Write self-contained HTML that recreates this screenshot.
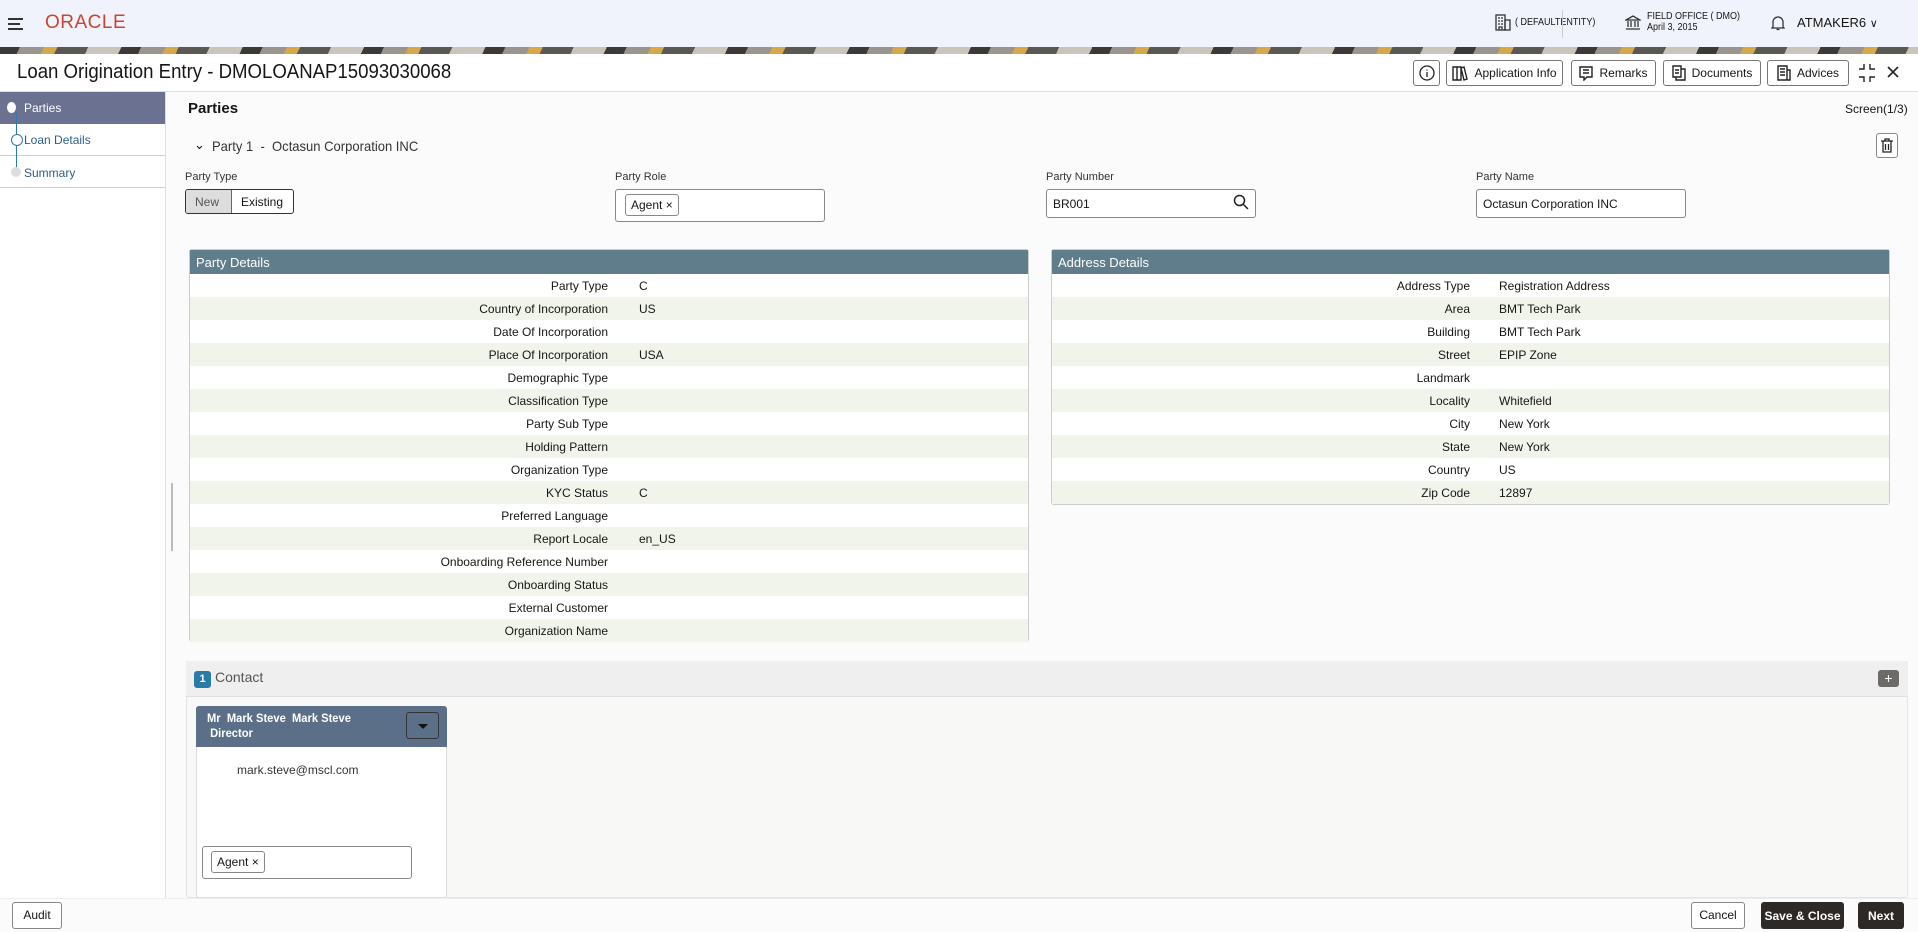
<!DOCTYPE html>
<html><head><meta charset="utf-8"><style>
*{box-sizing:border-box;margin:0;padding:0}
body{width:1918px;height:932px;overflow:hidden;position:relative;background:#fbfbfb;font-family:"Liberation Sans Narrow","Liberation Sans",sans-serif;color:#161513;font-size:13px}
.a{position:absolute}
.hdr{left:0;top:0;width:1918px;height:47px;background:#f0f3fb}
.strip{left:0;top:47px;width:1918px;height:7px;background:repeating-linear-gradient(115deg,#3b3a38 0 18px,#9a968f 18px 40px,#d6a84a 40px 52px,#5a5854 52px 80px,#c9c5bd 80px 110px)}
.title{left:0;top:54px;width:1918px;height:38px;background:#fff;border-bottom:1px solid #ddd}
.btn{position:absolute;top:60px;height:26px;border:1px solid #777;border-radius:3px;background:#fff;font-size:12px;display:flex;align-items:center;justify-content:center;gap:6px}
.side{left:0;top:92px;width:166px;height:806px;background:#fff;border-right:1px solid #ddd}
.si{position:absolute;left:0;width:165px;height:32px;border-bottom:1px solid #ccc;font-size:12px;padding:9px 0 0 24px;color:#2b5f8a}
.lbl{font-size:11px;color:#333}
.inp{position:absolute;border:1px solid #888;border-radius:3px;background:#fff}
.chip{position:absolute;border:1px solid #888;border-radius:3px;background:#fff;font-size:12px;padding:3px 5px}
.pan{position:absolute;background:#fff;border:1px solid #ccc;border-radius:3px}
.ph{height:24px;background:#607d8b;color:#fff;font-size:13px;padding:5px 6px}
.row{height:23px;font-size:12px;position:relative}
.row .k{position:absolute;right:0;text-align:right;top:5px}
.row .v{position:absolute;top:5px}
.dk{position:absolute;top:902px;height:27px;background:#2d2926;color:#fff;border-radius:3px;font-size:12px;font-weight:bold;display:flex;align-items:center;justify-content:center}
</style></head><body>
<div class="a hdr"></div>
<div class="a" style="left:8px;top:18px;width:15px;height:2px;background:#333"></div>
<div class="a" style="left:8px;top:23px;width:12px;height:2px;background:#333"></div>
<div class="a" style="left:8px;top:28px;width:15px;height:2px;background:#333"></div>
<div class="a" style="left:45px;top:12px;color:#c74634;font-family:'Liberation Sans',sans-serif;font-size:19px;letter-spacing:0.5px">ORACLE</div>
<svg class="a" style="left:1495px;top:14px" width="16" height="17" viewBox="0 0 16 17" fill="none" stroke="#333" stroke-width="1.3"><rect x="1" y="1" width="9" height="15"/><rect x="10" y="6" width="5" height="10"/><path d="M3 4h2M6 4h2M3 7h2M6 7h2M3 10h2M6 10h2M4 16v-3h3v3"/></svg>
<div class="a" style="left:1515px;top:17px;font-size:10px;transform:scaleX(0.9);transform-origin:left">( DEFAULTENTITY)</div>
<div class="a" style="left:1562px;top:10px;width:1px;height:28px;background:#ccc"></div>
<svg class="a" style="left:1625px;top:15px" width="16" height="15" viewBox="0 0 16 15" fill="none" stroke="#333" stroke-width="1.3"><path d="M1 5L8 1l7 4zM3 6v6M6 6v6M10 6v6M13 6v6M1 14h14"/></svg>
<div class="a" style="left:1647px;top:11px;font-size:10px;line-height:11px;transform:scaleX(0.9);transform-origin:left">FIELD OFFICE ( DMO)<br>April 3, 2015</div>
<svg class="a" style="left:1771px;top:14px" width="14" height="17" viewBox="0 0 14 17" fill="none" stroke="#333" stroke-width="1.3"><path d="M2 13V8a5 5 0 0110 0v5l1 1H1zM5.5 15.5h3"/></svg>
<div class="a" style="left:1797px;top:15px;font-size:13px">ATMAKER6 <span style="font-size:11px">&#8744;</span></div>
<div class="a strip"></div>
<div class="a title"></div>
<div class="a" style="left:17px;top:61px;font-size:20px;font-weight:500;transform:scaleX(0.93);transform-origin:left">Loan Origination Entry - DMOLOANAP15093030068</div>
<div class="btn" style="left:1413px;width:27px"><svg width="16" height="16" viewBox="0 0 16 16" fill="none" stroke="#222" stroke-width="1.3"><circle cx="8" cy="8" r="7"/><path d="M8 7v5M8 4.5v1"/></svg></div>
<div class="btn" style="left:1446px;width:117px"><svg width="16" height="15" viewBox="0 0 16 15" fill="none" stroke="#222" stroke-width="1.4"><path d="M1 1h4v13H1zM5 1h4v13H5zM9 2l3-1 3 12-3 1z"/></svg>Application Info</div>
<div class="btn" style="left:1571px;width:85px"><svg width="14" height="15" viewBox="0 0 14 15" fill="none" stroke="#222" stroke-width="1.4"><path d="M1 1h12v10H8l-3 3v-3H1zM4 4h6M4 7h6"/></svg>Remarks</div>
<div class="btn" style="left:1663px;width:98px"><svg width="14" height="16" viewBox="0 0 14 16" fill="none" stroke="#222" stroke-width="1.4"><path d="M1 1h8v11H1zM4 12v3h9V4H9M3 5h4M3 8h4"/></svg>Documents</div>
<div class="btn" style="left:1767px;width:82px"><svg width="14" height="16" viewBox="0 0 14 16" fill="none" stroke="#222" stroke-width="1.4"><path d="M1 1h9v14H1zM10 5h3v10h-3M3 4h5M3 7h5M3 10h5"/></svg>Advices</div>
<svg class="a" style="left:1858px;top:63px" width="18" height="20" viewBox="0 0 18 20" fill="none" stroke="#222" stroke-width="1.4"><path d="M6 1v5H1M12 1v5h5M6 19v-5H1M12 19v-5h5"/></svg>
<svg class="a" style="left:1886px;top:65px" width="14" height="14" viewBox="0 0 14 14" stroke="#222" stroke-width="1.6"><path d="M2 2l10 10M12 2L2 12"/></svg>

<div class="a side"></div>
<div class="si" style="top:92px;background:#6b7191;color:#fff;border-color:#6b7191">Parties</div>
<div class="a" style="left:7px;top:102px;width:9px;height:11px;border-radius:50%;background:#fff"></div>
<div class="si" style="top:124px">Loan Details</div>
<div class="a" style="left:11px;top:134px;width:12px;height:12px;border-radius:50%;border:1px solid #2b7ab0"></div>
<div class="a" style="left:16px;top:113px;width:1px;height:22px;background:#2b7ab0"></div>
<div class="a" style="left:16px;top:146px;width:1px;height:22px;background:#2b7ab0"></div>
<div class="si" style="top:156px;padding-top:10px">Summary</div>
<div class="a" style="left:11px;top:167px;width:10px;height:10px;border-radius:50%;background:#ddd"></div>
<div class="a" style="left:171px;top:483px;width:2px;height:68px;background:#bbb"></div>

<div class="a" style="left:188px;top:100px;font-size:15px;font-weight:bold">Parties</div>
<div class="a" style="left:1845px;top:102px;font-size:12px">Screen(1/3)</div>
<div class="a" style="left:194px;top:137px;font-size:13px">&#8964;</div>
<div class="a" style="left:212px;top:138px;font-size:14px;color:#333;transform:scaleX(0.93);transform-origin:left">Party 1 &nbsp;-&nbsp; Octasun Corporation INC</div>
<div class="a" style="left:1876px;top:133px;width:22px;height:25px;border:1px solid #888;border-radius:3px;background:#fff"></div>
<svg class="a" style="left:1880px;top:138px" width="14" height="15" viewBox="0 0 14 15" fill="none" stroke="#222" stroke-width="1.3"><path d="M1 3h12M5 3V1h4v2M3 3v11h8V3M5.5 6v6M8.5 6v6"/></svg>

<div class="a lbl" style="left:185px;top:171px">Party Type</div>
<div class="a" style="left:185px;top:189px;width:109px;height:25px;border:1px solid #333;border-radius:3px;background:#fff;font-size:12px;overflow:hidden">
<div class="a" style="left:0;top:0;width:45px;height:23px;background:#ddd;color:#555;padding:5px 0 0 9px">New</div>
<div class="a" style="left:45px;top:0;width:1px;height:23px;background:#666"></div>
<div class="a" style="left:55px;top:5px">Existing</div></div>
<div class="a lbl" style="left:615px;top:171px">Party Role</div>
<div class="inp" style="left:615px;top:189px;width:210px;height:33px"></div>
<div class="chip" style="left:625px;top:194px">Agent &#215;</div>
<div class="a lbl" style="left:1046px;top:171px">Party Number</div>
<div class="inp" style="left:1046px;top:189px;width:210px;height:29px;font-size:12px;padding:7px 6px">BR001</div>
<svg class="a" style="left:1233px;top:194px" width="16" height="16" viewBox="0 0 16 16" fill="none" stroke="#222" stroke-width="1.5"><circle cx="6.5" cy="6.5" r="5"/><path d="M10 10l5 5"/></svg>
<div class="a lbl" style="left:1476px;top:171px">Party Name</div>
<div class="inp" style="left:1476px;top:189px;width:210px;height:29px;font-size:12px;padding:7px 6px">Octasun Corporation INC</div>

<div class="pan" style="left:189px;top:249px;width:840px;height:393px">
<div class="ph">Party Details</div>
<div>
<div class="row" style="background:#fff"><span class="k" style="right:420px">Party Type</span><span class="v" style="left:449px">C</span></div>
<div class="row" style="background:#f1f4eb"><span class="k" style="right:420px">Country of Incorporation</span><span class="v" style="left:449px">US</span></div>
<div class="row" style="background:#fff"><span class="k" style="right:420px">Date Of Incorporation</span></div>
<div class="row" style="background:#f1f4eb"><span class="k" style="right:420px">Place Of Incorporation</span><span class="v" style="left:449px">USA</span></div>
<div class="row" style="background:#fff"><span class="k" style="right:420px">Demographic Type</span></div>
<div class="row" style="background:#f1f4eb"><span class="k" style="right:420px">Classification Type</span></div>
<div class="row" style="background:#fff"><span class="k" style="right:420px">Party Sub Type</span></div>
<div class="row" style="background:#f1f4eb"><span class="k" style="right:420px">Holding Pattern</span></div>
<div class="row" style="background:#fff"><span class="k" style="right:420px">Organization Type</span></div>
<div class="row" style="background:#f1f4eb"><span class="k" style="right:420px">KYC Status</span><span class="v" style="left:449px">C</span></div>
<div class="row" style="background:#fff"><span class="k" style="right:420px">Preferred Language</span></div>
<div class="row" style="background:#f1f4eb"><span class="k" style="right:420px">Report Locale</span><span class="v" style="left:449px">en_US</span></div>
<div class="row" style="background:#fff"><span class="k" style="right:420px">Onboarding Reference Number</span></div>
<div class="row" style="background:#f1f4eb"><span class="k" style="right:420px">Onboarding Status</span></div>
<div class="row" style="background:#fff"><span class="k" style="right:420px">External Customer</span></div>
<div class="row" style="background:#f1f4eb"><span class="k" style="right:420px">Organization Name</span></div>
</div></div>

<div class="pan" style="left:1051px;top:249px;width:839px;height:256px">
<div class="ph">Address Details</div>
<div>
<div class="row" style="background:#fff"><span class="k" style="right:419px">Address Type</span><span class="v" style="left:447px">Registration Address</span></div>
<div class="row" style="background:#f1f4eb"><span class="k" style="right:419px">Area</span><span class="v" style="left:447px">BMT Tech Park</span></div>
<div class="row" style="background:#fff"><span class="k" style="right:419px">Building</span><span class="v" style="left:447px">BMT Tech Park</span></div>
<div class="row" style="background:#f1f4eb"><span class="k" style="right:419px">Street</span><span class="v" style="left:447px">EPIP Zone</span></div>
<div class="row" style="background:#fff"><span class="k" style="right:419px">Landmark</span></div>
<div class="row" style="background:#f1f4eb"><span class="k" style="right:419px">Locality</span><span class="v" style="left:447px">Whitefield</span></div>
<div class="row" style="background:#fff"><span class="k" style="right:419px">City</span><span class="v" style="left:447px">New York</span></div>
<div class="row" style="background:#f1f4eb"><span class="k" style="right:419px">State</span><span class="v" style="left:447px">New York</span></div>
<div class="row" style="background:#fff"><span class="k" style="right:419px">Country</span><span class="v" style="left:447px">US</span></div>
<div class="row" style="background:#f1f4eb"><span class="k" style="right:419px">Zip Code</span><span class="v" style="left:447px">12897</span></div>
</div></div>

<div class="a" style="left:186px;top:661px;width:1722px;height:237px;background:#f8f8f7;border:1px solid #e4e4e4;border-radius:3px"></div>
<div class="a" style="left:186px;top:661px;width:1722px;height:36px;background:#efefef;border-bottom:1px solid #e0e0e0"></div>
<div class="a" style="left:194px;top:671px;width:17px;height:17px;background:#2a7ba8;color:#fff;border-radius:3px;font-size:11px;font-weight:bold;text-align:center;line-height:17px">1</div>
<div class="a" style="left:215px;top:669px;font-size:14px;color:#555">Contact</div>
<div class="a" style="left:1878px;top:670px;width:21px;height:17px;background:#6d6b68;border-radius:3px;color:#fff;text-align:center;line-height:16px;font-size:14px">+</div>

<div class="a" style="left:196px;top:706px;width:251px;height:192px;background:#fff;border:1px solid #ddd;border-radius:3px"></div>
<div class="a" style="left:196px;top:706px;width:251px;height:41px;background:#5b7088;border-radius:3px 3px 0 0"></div>
<div class="a" style="left:207px;top:711px;color:#fff;font-size:12px;font-weight:bold;line-height:15px;transform:scaleX(0.93);transform-origin:left">Mr &nbsp;Mark Steve &nbsp;Mark Steve<br>&nbsp;Director</div>
<div class="a" style="left:406px;top:712px;width:33px;height:27px;border:1px solid #333;border-radius:3px;background:#5b7088"></div>
<div class="a" style="left:418px;top:724px;width:0;height:0;border-left:5px solid transparent;border-right:5px solid transparent;border-top:5px solid #111"></div>
<div class="a" style="left:237px;top:763px;font-size:12px;color:#333">mark.steve@mscl.com</div>
<div class="inp" style="left:202px;top:846px;width:210px;height:33px"></div>
<div class="chip" style="left:211px;top:851px">Agent &#215;</div>

<div class="a" style="left:0;top:898px;width:1918px;height:34px;background:#fbfbfb;border-top:1px solid #eee"></div>
<div class="a" style="left:12px;top:902px;width:50px;height:27px;border:1px solid #888;border-radius:3px;background:#fff;font-size:12px;text-align:center;line-height:25px">Audit</div>
<div class="a" style="left:1691px;top:902px;width:54px;height:27px;border:1px solid #888;border-radius:3px;background:#fff;font-size:12px;text-align:center;line-height:25px">Cancel</div>
<div class="dk" style="left:1761px;width:83px">Save &amp; Close</div>
<div class="dk" style="left:1858px;width:46px">Next</div>
</body></html>
